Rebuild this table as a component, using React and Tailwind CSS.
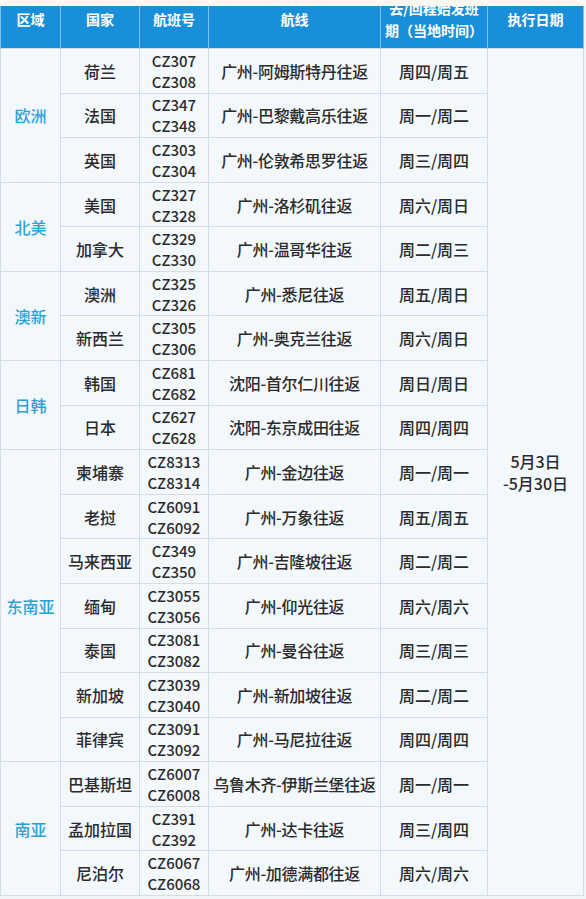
import React from "react";

const groups = [
  {
    region: "欧洲",
    rows: [
      ["荷兰", "CZ307", "CZ308", "广州-阿姆斯特丹往返", "周四/周五"],
      ["法国", "CZ347", "CZ348", "广州-巴黎戴高乐往返", "周一/周二"],
      ["英国", "CZ303", "CZ304", "广州-伦敦希思罗往返", "周三/周四"],
    ],
  },
  {
    region: "北美",
    rows: [
      ["美国", "CZ327", "CZ328", "广州-洛杉矶往返", "周六/周日"],
      ["加拿大", "CZ329", "CZ330", "广州-温哥华往返", "周二/周三"],
    ],
  },
  {
    region: "澳新",
    rows: [
      ["澳洲", "CZ325", "CZ326", "广州-悉尼往返", "周五/周日"],
      ["新西兰", "CZ305", "CZ306", "广州-奥克兰往返", "周六/周日"],
    ],
  },
  {
    region: "日韩",
    rows: [
      ["韩国", "CZ681", "CZ682", "沈阳-首尔仁川往返", "周日/周日"],
      ["日本", "CZ627", "CZ628", "沈阳-东京成田往返", "周四/周四"],
    ],
  },
  {
    region: "东南亚",
    rows: [
      ["柬埔寨", "CZ8313", "CZ8314", "广州-金边往返", "周一/周一"],
      ["老挝", "CZ6091", "CZ6092", "广州-万象往返", "周五/周五"],
      ["马来西亚", "CZ349", "CZ350", "广州-吉隆坡往返", "周二/周二"],
      ["缅甸", "CZ3055", "CZ3056", "广州-仰光往返", "周六/周六"],
      ["泰国", "CZ3081", "CZ3082", "广州-曼谷往返", "周三/周三"],
      ["新加坡", "CZ3039", "CZ3040", "广州-新加坡往返", "周二/周二"],
      ["菲律宾", "CZ3091", "CZ3092", "广州-马尼拉往返", "周四/周四"],
    ],
  },
  {
    region: "南亚",
    rows: [
      ["巴基斯坦", "CZ6007", "CZ6008", "乌鲁木齐-伊斯兰堡往返", "周一/周一"],
      ["孟加拉国", "CZ391", "CZ392", "广州-达卡往返", "周三/周四"],
      ["尼泊尔", "CZ6067", "CZ6068", "广州-加德满都往返", "周六/周六"],
    ],
  },
];

const font = { fontFamily: '"Noto Sans CJK SC", "Noto Sans", sans-serif' };

export default function App() {
  let first = true;
  const body = [];
  groups.forEach((g, gi) => {
    g.rows.forEach((r, ri) => {
      body.push(
        <tr key={gi + "-" + ri} className="h-[44.58px]">
          {ri === 0 && (
            <td
              rowSpan={g.rows.length}
              className="border border-[#d5dce4] text-center align-middle text-[16px] font-medium text-[#2ea2d6]"
            >
              {g.region}
            </td>
          )}
          <td className="border border-[#d5dce4] text-center align-middle text-[16px] font-medium text-[#2b2b2b] whitespace-nowrap">
            {r[0]}
          </td>
          <td className="border border-[#d5dce4] text-center align-middle text-[15px] leading-[21px] font-medium text-[#2b2b2b]">
            <div>{r[1]}</div>
            <div>{r[2]}</div>
          </td>
          <td className="border border-[#d5dce4] text-center align-middle text-[16px] font-medium text-[#2b2b2b] whitespace-nowrap tracking-[-0.3px]">
            {r[3]}
          </td>
          <td className="border border-[#d5dce4] text-center align-middle text-[16px] font-medium text-[#2b2b2b]">
            {r[4]}
          </td>
          {first && (
            <td
              rowSpan={19}
              className="border border-[#d5dce4] text-center align-middle text-[16px] leading-[22px] font-medium text-[#2b2b2b]"
            >
              <div>5月3日</div>
              <div>-5月30日</div>
            </td>
          )}
        </tr>
      );
      first = false;
    });
  });

  return (
    <div className="w-[586px] h-[899px] bg-[#eef4f8] overflow-hidden" style={font}>
      <div className="h-[6px] bg-[#fbf8f0]" />
      <div className="w-[583px]">
        <table className="w-[583px] border-collapse table-fixed bg-[#f3f8fc]">
          <colgroup>
            <col className="w-[60px]" />
            <col className="w-[79px]" />
            <col className="w-[69px]" />
            <col className="w-[172px]" />
            <col className="w-[107px]" />
            <col className="w-[96px]" />
          </colgroup>
          <thead>
            <tr className="h-[42px] bg-[#1a8fd9]">
              <th className="border-x border-[#74c3ef] align-top pt-[3px] text-[14px] font-bold text-white">区域</th>
              <th className="border-x border-[#74c3ef] align-top pt-[3px] text-[14px] font-bold text-white">国家</th>
              <th className="border-x border-[#74c3ef] align-top pt-[3px] text-[14px] font-bold text-white">航班号</th>
              <th className="border-x border-[#74c3ef] align-top pt-[3px] text-[14px] font-bold text-white">航线</th>
              <th className="border-x border-[#74c3ef] align-top p-0 text-[14px] font-bold text-white">
                <div className="h-[42px] overflow-hidden">
                  <div className="-mt-[9px] leading-[22px] px-[4px]">去/回程始发班期（当地时间）</div>
                </div>
              </th>
              <th className="border-x border-[#74c3ef] align-top pt-[3px] text-[14px] font-bold text-white">执行日期</th>
            </tr>
          </thead>
          <tbody>{body}</tbody>
        </table>
      </div>
    </div>
  );
}
